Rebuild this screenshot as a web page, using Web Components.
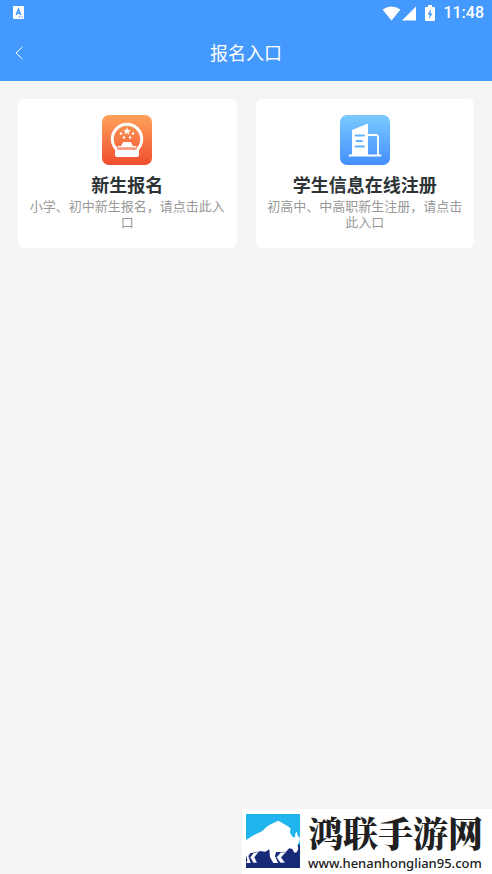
<!DOCTYPE html>
<html lang="zh-CN">
<head>
<meta charset="utf-8">
<meta name="viewport" content="width=device-width, initial-scale=1">
<title>报名入口</title>
<style>
  html { background: #f5f5f5; }
  body { margin: 0; font-family: "Noto Sans CJK SC", sans-serif; }
</style>
</head>
<body>
<entry-page></entry-page>
<script>
const define = (name, html) => {
  const template = document.createElement('template');
  template.innerHTML = html;
  customElements.define(name, class extends HTMLElement {
    constructor() {
      super();
      this.attachShadow({ mode: 'open' }).append(template.content.cloneNode(true));
    }
  });
};

define('status-bar', `
<style>
  :host { display: flex; align-items: center; height: 25px; padding: 0 8px 0 13px; color: #fff;
    font: 500 16px/25px Roboto, sans-serif; }
  svg { display: block; flex: none; }
  .signals { display: flex; align-items: center; margin-left: auto; }
  .battery { margin: 0 8px; }
</style>
<svg width="11" height="13" viewBox="0 0 11 13" aria-hidden="true">
  <rect width="11" height="13" rx="1" fill="#fff"/>
  <path d="M3.2 9 5.5 3.2 7.8 9M4 7.3h3" fill="none" stroke="#4499ff" stroke-width="1.5"/>
  <path d="M5.5 11h2M8.5 11h1.5" stroke="#8fc3ff" stroke-width="1.5"/>
</svg>
<div class="signals">
  <svg width="35" height="16" viewBox="0 0 35 16" aria-hidden="true" fill="#fff">
    <path d="M.5 4.5Q9.500-1.500 18.500 4.500L9.500 15.500Z"/><path d="M34 1.500V15.500H20Z"/>
  </svg>
  <svg class="battery" width="10" height="16" viewBox="0 0 10 16" aria-hidden="true">
    <path d="M3 0h4v2h2q1 0 1 1v12q0 1-1 1H1q-1 0-1-1V3q0-1 1-1h2Z" fill="#fff"/>
    <path d="M6 4 2.500 9.500h2L4 14l3.500-5.500h-2Z" fill="#4499ff"/>
  </svg>
  <span>11:48</span>
</div>`);

define('nav-bar', `
<style>
  :host { display: grid; grid-template-columns: 40px 1fr 40px; align-items: center; height: 56px; color: #fff; }
  button { display: flex; align-items: center; height: 40px; padding: 0 0 0 15px; border: 0; background: none; color: inherit; }
  h1 { margin: 0; padding-bottom: 2px; text-align: center; font-size: 18px; line-height: 28px; font-weight: 400; }
</style>
<button type="button" aria-label="返回"><svg width="9" height="14" viewBox="0 0 9 14" fill="none" stroke="currentColor" stroke-width="1"><path d="M7.500 1 1 7l6.500 6"/></svg></button>
<h1><slot></slot></h1>`);

define('entry-card', `
<style>
  :host { display: block; min-width: 0; }
  a { box-sizing: border-box; display: flex; flex-direction: column; align-items: center; height: 100%;
    padding: 16px 10px 18px; border-radius: 6px; background: #fff; text-align: center; text-decoration: none; }
  ::slotted(svg) { display: block; width: 50px; height: 50px; }
  h2 { margin: 6px 0 1px; color: #2d3436; font-size: 18px; line-height: 26px; font-weight: 700; }
  p { margin: 0; color: #999; font-size: 13px; line-height: 16px; }
</style>
<a href="#"><slot name="icon"></slot><h2><slot name="title"></slot></h2><p><slot></slot></p></a>`);

define('site-mark', `
<style>
  :host { position: fixed; right: 0; bottom: 0; display: flex; align-items: flex-start; gap: 8px; box-sizing: border-box;
    width: 250px; height: 65px; padding: 5px 4px 0; background: #fff; color: #202020; white-space: nowrap; }
  svg { display: block; flex: none; }
  .name { padding-top: 3px; font: 900 35px/38px "Liberation Serif", "Noto Serif CJK SC", "Noto Sans CJK SC", serif; }
  .url { font: 500 13px/16px "Liberation Sans", sans-serif; font-family: "Noto Sans", sans-serif; }
</style>
<svg width="54" height="54" viewBox="6 8 162 162" role="img" aria-label="鸿联手游网">
  <path d="M6 8h162v162H6Z" fill="#20b6ed"/>
  <path d="M6 100h162v70H6Z" fill="#162a78"/>
  <path d="M6 86 30 71 54 60 68 46 80 39 103 28 134 46 140 52 138 63 144 74 151 78 154 64 158 60 161 73 168 80 166 93 161 99 163 113 158 123 151 124 145 113 136 111 128 119 116 122H84L76 114 64 121 40 118 32 124 6 126Z" fill="#fff"/>
  <path d="M6 112H22L20 124 13 134 20 155H6ZM76 112H99L93 134 102 155H88L78 138Z" fill="#fff"/>
  <path d="M45 121 30 123 18 138 28 155H40L32 138ZM128 121 110 123 97 138 109 155H124L112 138Z" fill="#fff" stroke="#162a78" stroke-width="2"/>
  <path d="M24 116H46V121H24ZM101 114H127V121H101Z" fill="#fff"/>
  <path d="M6 132 10 145 7 155H6Z" fill="#162a78"/>
  <path d="M147 37Q158 45 156 58 152 65 147 62L139 57 140 66 149 79 154 76 153 68 159 60Q162 48 147 37Z" fill="#20b6ed"/>
</svg>
<div><div class="name">鸿联手游网</div><div class="url">www.henanhonglian95.com</div></div>`);

define('entry-page', `
<style>
  :host { display: block; min-height: 100vh; background: #f5f5f5; }
  header { background: #4499ff; }
  main { display: grid; grid-template-columns: 1fr 1fr; gap: 19px; padding: 18px; }
</style>
<header><status-bar></status-bar><nav-bar>报名入口</nav-bar></header>
<main>
  <entry-card>
    <svg slot="icon" viewBox="0 0 50 50" aria-hidden="true">
      <defs><linearGradient id="o" x2="0" y2="1"><stop stop-color="#ffa35a"/><stop offset="1" stop-color="#ef4d2f"/></linearGradient></defs>
      <rect width="50" height="50" rx="7" fill="url(#o)"/>
      <circle cx="25" cy="24" r="14.700" fill="none" stroke="#fff" stroke-width="3"/>
      <path d="M15 34h20q2 0 2 2v4q0 2-2 2H15q-2 0-2-2v-4q0-2 2-2Z" fill="#fff"/>
      <path d="M16 33.500h18l1 2H15Z" fill="#fff"/>
      <path d="M15 33.500q3 1.500 5 .5h10q2 1 5-.5" fill="none" stroke="#f5653b" stroke-width="1"/>
      <path d="M15.500 32.500v-1.500h4v-1.500l2-2.500h7l2 2.500v1.500h4v1.500Z" fill="#fff"/>
      <path d="m25 12 1 3h3l-2.400 1.800.9 2.900-2.500-1.700-2.500 1.700.9-2.900L21 15h3Z" fill="#fff"/>
      <g fill="#fff"><circle cx="19" cy="18.500" r="1.200"/><circle cx="31" cy="18.500" r="1.200"/><circle cx="22" cy="22.500" r="1.200"/><circle cx="28" cy="22.500" r="1.200"/></g>
    </svg>
    <span slot="title">新生报名</span>小学、初中新生报名，请点击此入口
  </entry-card>
  <entry-card>
    <svg slot="icon" viewBox="0 0 50 50" aria-hidden="true">
      <defs><linearGradient id="b" x2="0" y2="1"><stop stop-color="#7bcaff"/><stop offset="1" stop-color="#438fff"/></linearGradient></defs>
      <rect width="50" height="50" rx="7" fill="url(#b)"/>
      <path d="M12 15 28 8.500V41H12Z" fill="#fff"/>
      <path d="M28 20h8q2 0 2 2v18M9.500 40.500h31" fill="none" stroke="#fff" stroke-width="1.800" stroke-linecap="round"/>
      <path d="M15.500 20.500h8.500M16.500 26h5.500M15.500 31.500h8.500" stroke="#62b3ff" stroke-width="1.800" stroke-linecap="round"/>
    </svg>
    <span slot="title">学生信息在线注册</span>初高中、中高职新生注册，请点击此入口
  </entry-card>
</main>
<site-mark></site-mark>`);
</script>
</body>
</html>
